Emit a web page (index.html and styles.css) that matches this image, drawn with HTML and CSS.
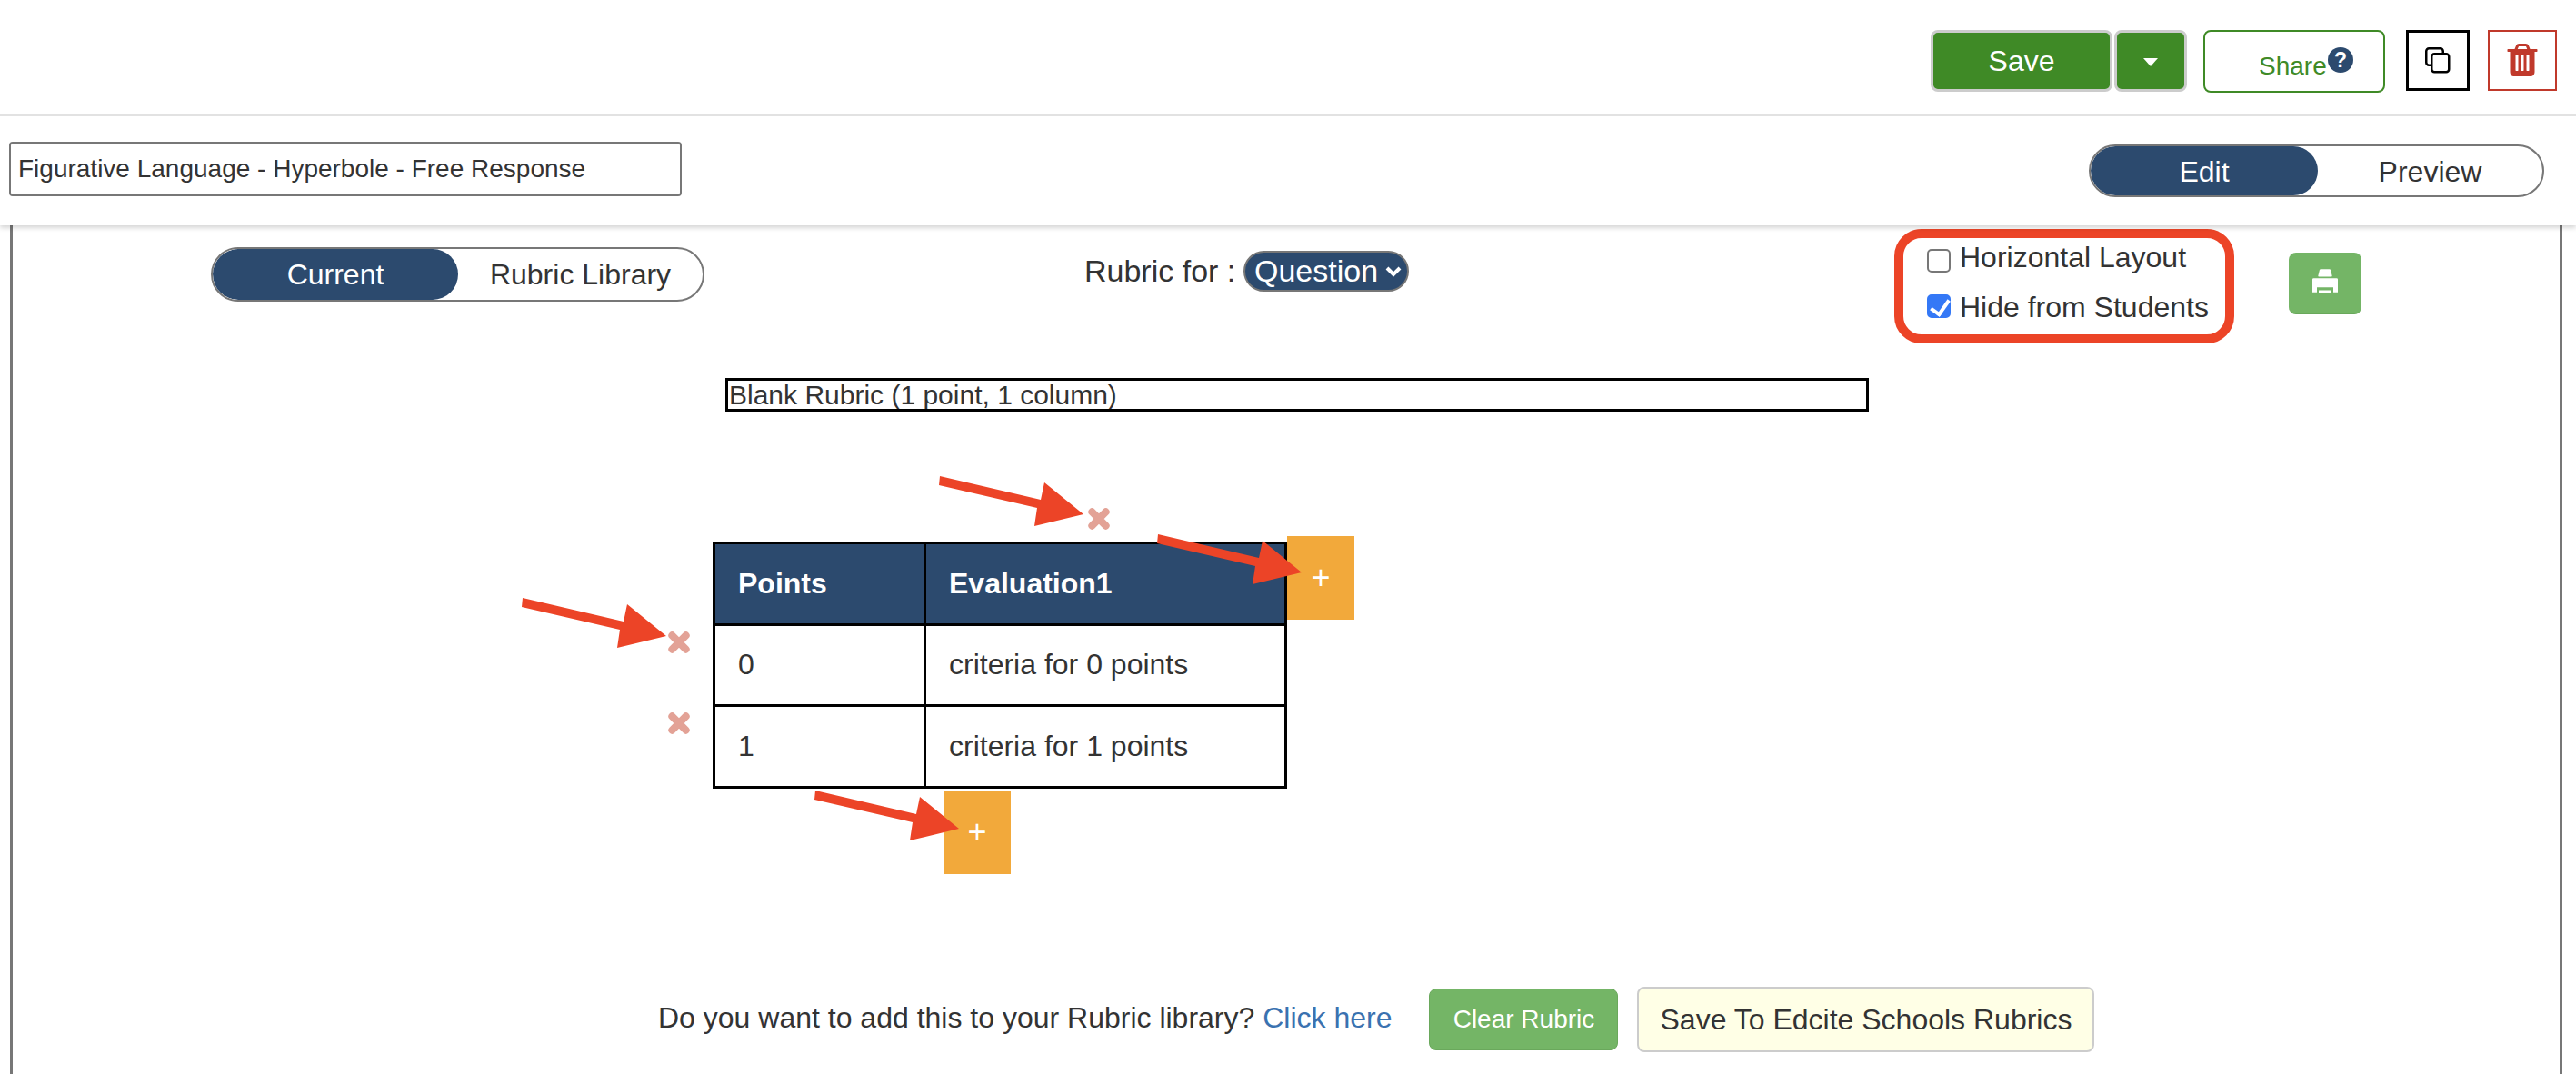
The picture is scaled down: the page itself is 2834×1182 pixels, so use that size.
FILE: index.html
```html
<!DOCTYPE html>
<html lang="en">
<head>
<meta charset="utf-8">
<title>Rubric editor</title>
<link rel="stylesheet" href="styles.css">
</head>
<body>
<header class="topbar">
  <div class="actions">
    <button class="btn-save">Save</button>
    <button class="btn-caret"><span class="caret"></span></button>
    <button class="btn-share">
      <span class="share-label">Share</span>
      <svg class="help" viewBox="0 0 28 28"><circle cx="14" cy="14" r="14" fill="#2c4a6e"/><text x="14" y="22" text-anchor="middle" class="help-mark">?</text></svg>
    </button>
    <button class="btn-copy">
      <svg class="copy-icon" viewBox="0 0 28 29"><rect x="1.250" y="1.250" width="18.500" height="18.500" rx="3" fill="none" stroke="#000" stroke-width="2.500"/><rect x="7.250" y="7.250" width="19" height="20" rx="3" fill="#fff" stroke="#000" stroke-width="2.500"/></svg>
    </button>
    <button class="btn-trash">
      <svg class="trash-icon" viewBox="128 128 1536 1536"><path fill="#c0392b" d="M704 1376v-704q0-14-9-23t-23-9h-64q-14 0-23 9t-9 23v704q0 14 9 23t23 9h64q14 0 23-9t9-23zm256 0v-704q0-14-9-23t-23-9h-64q-14 0-23 9t-9 23v704q0 14 9 23t23 9h64q14 0 23-9t9-23zm256 0v-704q0-14-9-23t-23-9h-64q-14 0-23 9t-9 23v704q0 14 9 23t23 9h64q14 0 23-9t9-23zm-544-992h448l-48-117q-7-9-17-11h-317q-10 2-17 11zm928 32v64q0 14-9 23t-23 9h-96v948q0 83-47 143.500t-113 60.500h-832q-66 0-113-58.500t-47-141.500v-952h-96q-14 0-23-9t-9-23v-64q0-14 9-23t23-9h309l70-167q15-37 54-63t79-26h320q40 0 79 26t54 63l70 167h309q14 0 23 9t9 23z"/></svg>
    </button>
  </div>
  <div class="titlebar">
    <input class="title-input" type="text" value="Figurative Language - Hyperbole - Free Response">
    <div class="toggle toggle-edit">
      <span class="toggle-on">Edit</span>
      <span class="toggle-off">Preview</span>
    </div>
  </div>
</header>

<main class="panel">
  <div class="controls">
    <div class="toggle toggle-source">
      <span class="toggle-on">Current</span>
      <span class="toggle-off">Rubric Library</span>
    </div>
    <div class="rubric-for">
      <span>Rubric for :</span>
      <span class="scope-select">Question
        <svg class="chevron" viewBox="0 0 20 14"><path d="M3 3l7 7 7-7" fill="none" stroke="#fff" stroke-width="4"/></svg>
      </span>
    </div>
    <div class="options">
      <label class="option"><input type="checkbox">Horizontal Layout</label>
      <label class="option"><input type="checkbox" checked>Hide from Students</label>
    </div>
    <button class="btn-print">
      <svg class="print-icon" viewBox="0 0 84 80"><path fill="#fff" d="M24 2Q25 0 28 0H56Q59 0 60 2L65 22Q66 25 62 25H22Q18 25 19 22ZM4 30H80Q84 30 84 34V77H69V60H15V77H0V34Q0 30 4 30ZM21 70H63V80H21Z"/></svg>
    </button>
  </div>

  <input class="rubric-name" type="text" value="Blank Rubric (1 point, 1 column)">

  <div class="rubric">
    <table class="rubric-table">
      <tr><th class="col-points">Points</th><th>Evaluation1</th></tr>
      <tr><td>0</td><td>criteria for 0 points</td></tr>
      <tr><td>1</td><td>criteria for 1 points</td></tr>
    </table>
    <svg class="del del-col" viewBox="0 0 24 24"><path d="M5 5l14 14M19 5L5 19"/></svg>
    <svg class="del del-row0" viewBox="0 0 24 24"><path d="M5 5l14 14M19 5L5 19"/></svg>
    <svg class="del del-row1" viewBox="0 0 24 24"><path d="M5 5l14 14M19 5L5 19"/></svg>
    <button class="add add-col">+</button>
    <button class="add add-row">+</button>
  </div>

  <div class="library">
    <p class="library-text">Do you want to add this to your Rubric library? <a href="#">Click here</a></p>
    <button class="btn-clear">Clear Rubric</button>
    <button class="btn-school">Save To Edcite Schools Rubrics</button>
  </div>

  <svg class="arrow arrow-a" viewBox="0 0 170 70"><path d="M12 14L123 40L127 21L170 56L116 69L119 49L11 24Z"/></svg>
  <svg class="arrow arrow-b" viewBox="0 0 170 70"><path d="M12 14L123 40L127 21L170 56L116 69L119 49L11 24Z"/></svg>
  <svg class="arrow arrow-c" viewBox="0 0 170 70"><path d="M12 14L123 40L127 21L170 56L116 69L119 49L11 24Z"/></svg>
  <svg class="arrow arrow-d" viewBox="0 0 170 70"><path d="M12 14L123 40L127 21L170 56L116 69L119 49L11 24Z"/></svg>
</main>
</body>
</html>
```
FILE: styles.css
```css
* { box-sizing: border-box; }
html, body { margin: 0; height: 100%; overflow: hidden; }
body { background: #fff; font-family: "Liberation Sans", Arial, sans-serif; color: #333; font-size: 32px; }
button { font-family: inherit; padding: 0; cursor: pointer; }

.topbar { position: relative; z-index: 2; background: #fff; height: 248px; box-shadow: 0 3px 5px rgba(0,0,0,.16); }
.actions { height: 128px; border-bottom: 3px solid #e2e2e2; display: flex; padding: 33px 0 0 2124px; align-items: flex-start; }
.btn-save { width: 200px; height: 68px; background: #3f8a26; border: 3px solid #ccc; border-radius: 8px; color: #fff; font-size: 32px; }
.btn-caret { width: 80px; height: 68px; margin-left: 2px; background: #3f8a26; border: 3px solid #ccc; border-radius: 8px; display: flex; align-items: center; justify-content: center; }
.caret { border-left: 8px solid transparent; border-right: 8px solid transparent; border-top: 9px solid #fff; margin-top: 3px; }
.btn-share { width: 200px; height: 69px; margin-left: 18px; background: #fff; border: 2.5px solid #3f8a26; border-radius: 8px; color: #3f8a26; font-size: 28px; display: flex; align-items: flex-start; padding: 21px 0 0 59px; }
.share-label { line-height: 34px; }
.help { width: 28px; height: 28px; margin-top: -4px; margin-left: 1px; }
.help-mark { font: bold 23px "Liberation Sans", Arial, sans-serif; fill: #fff; }
.btn-copy { width: 70px; height: 67px; margin-left: 23px; background: #fff; border: 3px solid #000; display: flex; align-items: center; justify-content: center; }
.copy-icon { width: 28px; height: 29px; }
.btn-trash { width: 76px; height: 67px; margin-left: 20px; background: #fff; border: 2.5px solid #c0392b; display: flex; align-items: center; justify-content: center; }
.trash-icon { width: 36px; height: 36px; margin-top: -1px; }

.titlebar { display: flex; justify-content: space-between; align-items: flex-start; padding: 28px 35px 0 10px; }
.title-input { width: 740px; height: 60px; margin-top: 0; border: 2.5px solid #777; border-radius: 4px; padding: 0 8px; font: 28px "Liberation Sans", Arial, sans-serif; color: #333; background: #fff; }
.toggle { display: flex; border: 2.5px solid #777; border-radius: 32px; background: #fff; overflow: hidden; align-items: stretch; }
.toggle span { display: flex; align-items: center; justify-content: center; }
.toggle-on { background: #2c4a6e; color: #fff; border-radius: 32px; }
.toggle-off { color: #333; flex: 1; }
.toggle-edit { width: 501px; height: 58px; margin-top: 3px; }
.toggle-edit span { padding-top: 2px; }
.toggle-edit .toggle-on { width: 250px; }
.toggle-source { width: 543px; height: 60px; margin: 20px 0 0 218px; }
.toggle-source .toggle-on { width: 270px; }

.panel { position: relative; margin-left: 11px; width: 2808px; height: 934px; border-left: 3px solid #777; border-right: 3px solid #777; overflow: hidden; padding-top: 4px; }
.controls { display: flex; align-items: flex-start; height: 126px; }
.rubric-for { display: flex; align-items: center; justify-content: space-between; width: 357px; margin: 24px 0 0 418px; height: 45px; font-size: 34px; }
.scope-select { display: flex; align-items: center; gap: 7px; height: 45px; width: 182px; padding-left: 10px; background: #2c4a6e; color: #fff; border: 2px solid #777; border-radius: 23px; }
.chevron { width: 20px; height: 14px; }
.options { width: 374px; height: 126px; margin-left: 534px; border: 10px solid #ec4427; border-radius: 30px; padding: 3px 0 0 26px; display: flex; flex-direction: column; gap: 19px; }
.option { display: flex; align-items: center; gap: 10px; height: 36px; white-space: nowrap; }
.option input { appearance: none; position: relative; width: 26px; height: 26px; margin: 7px 0 0; background: #fff; border: 2px solid #777; border-radius: 5px; flex: none; }
.option input:checked { margin-top: -2px; background: #3478f6; border-color: #3478f6; }
.option input:checked::after { content: ""; position: absolute; left: 6px; top: 0; width: 9px; height: 17px; border: solid #fff; border-width: 0 4px 4px 0; transform: rotate(35deg); }
.btn-print { width: 80px; height: 68px; margin: 26px 0 0 60px; background: #74b566; border: none; border-bottom: 1px solid #69a85b; border-radius: 8px; display: flex; align-items: center; justify-content: center; }
.print-icon { width: 28px; height: 27px; margin-top: -4px; }

.rubric-name { display: block; width: 1258px; height: 37px; margin: 38px 0 0 784px; border: 3px solid #000; padding: 0 1px; font: 30px "Liberation Sans", Arial, sans-serif; color: #333; background: #fff; }

.rubric { position: relative; width: 632px; height: 272px; margin: 143px 0 0 770px; }
.rubric-table { width: 632px; height: 272px; border-collapse: collapse; table-layout: fixed; border: 3px solid #000; }
.rubric-table th, .rubric-table td { border: 3px solid #000; text-align: left; padding: 0 0 0 25px; font-size: 32px; }
.rubric-table th { background: #2c4a6e; color: #fff; font-weight: bold; }
.col-points { width: 232px; }
.del { position: absolute; width: 26px; height: 26px; }
.del path { fill: none; stroke: #e3a296; stroke-width: 7.500; stroke-linecap: round; }
.del-col { left: 412px; top: -38px; }
.del-row0 { left: -50px; top: 98px; }
.del-row1 { left: -50px; top: 187px; }
.add { position: absolute; width: 74px; height: 92px; border: none; background: #f2a93b; color: #fff; font-size: 36px; }
.add-col { left: 632px; top: -6px; }
.add-row { left: 254px; top: 274px; }

.library { display: flex; align-items: flex-start; margin: 218px 0 0 710px; }
.library-text { margin: 16px 0 0; white-space: nowrap; }
.library-text a { color: #3a72b0; text-decoration: none; }
.btn-clear { width: 208px; height: 68px; margin: 2px 0 0 41px; background: #74b566; border: 1px solid #6aa85c; border-radius: 8px; color: #fff; font-size: 28px; }
.btn-school { width: 503px; height: 72px; margin-left: 21px; background: #ffffe6; border: 2px solid #ccc; border-radius: 8px; color: #333; font-size: 32px; }

.arrow { position: absolute; width: 170px; height: 70px; }
.arrow path { fill: #ec4427; }
.arrow-a { left: 1008px; top: 262px; }
.arrow-b { left: 1248px; top: 326px; }
.arrow-c { left: 549px; top: 396px; }
.arrow-d { left: 871px; top: 608px; }
```
